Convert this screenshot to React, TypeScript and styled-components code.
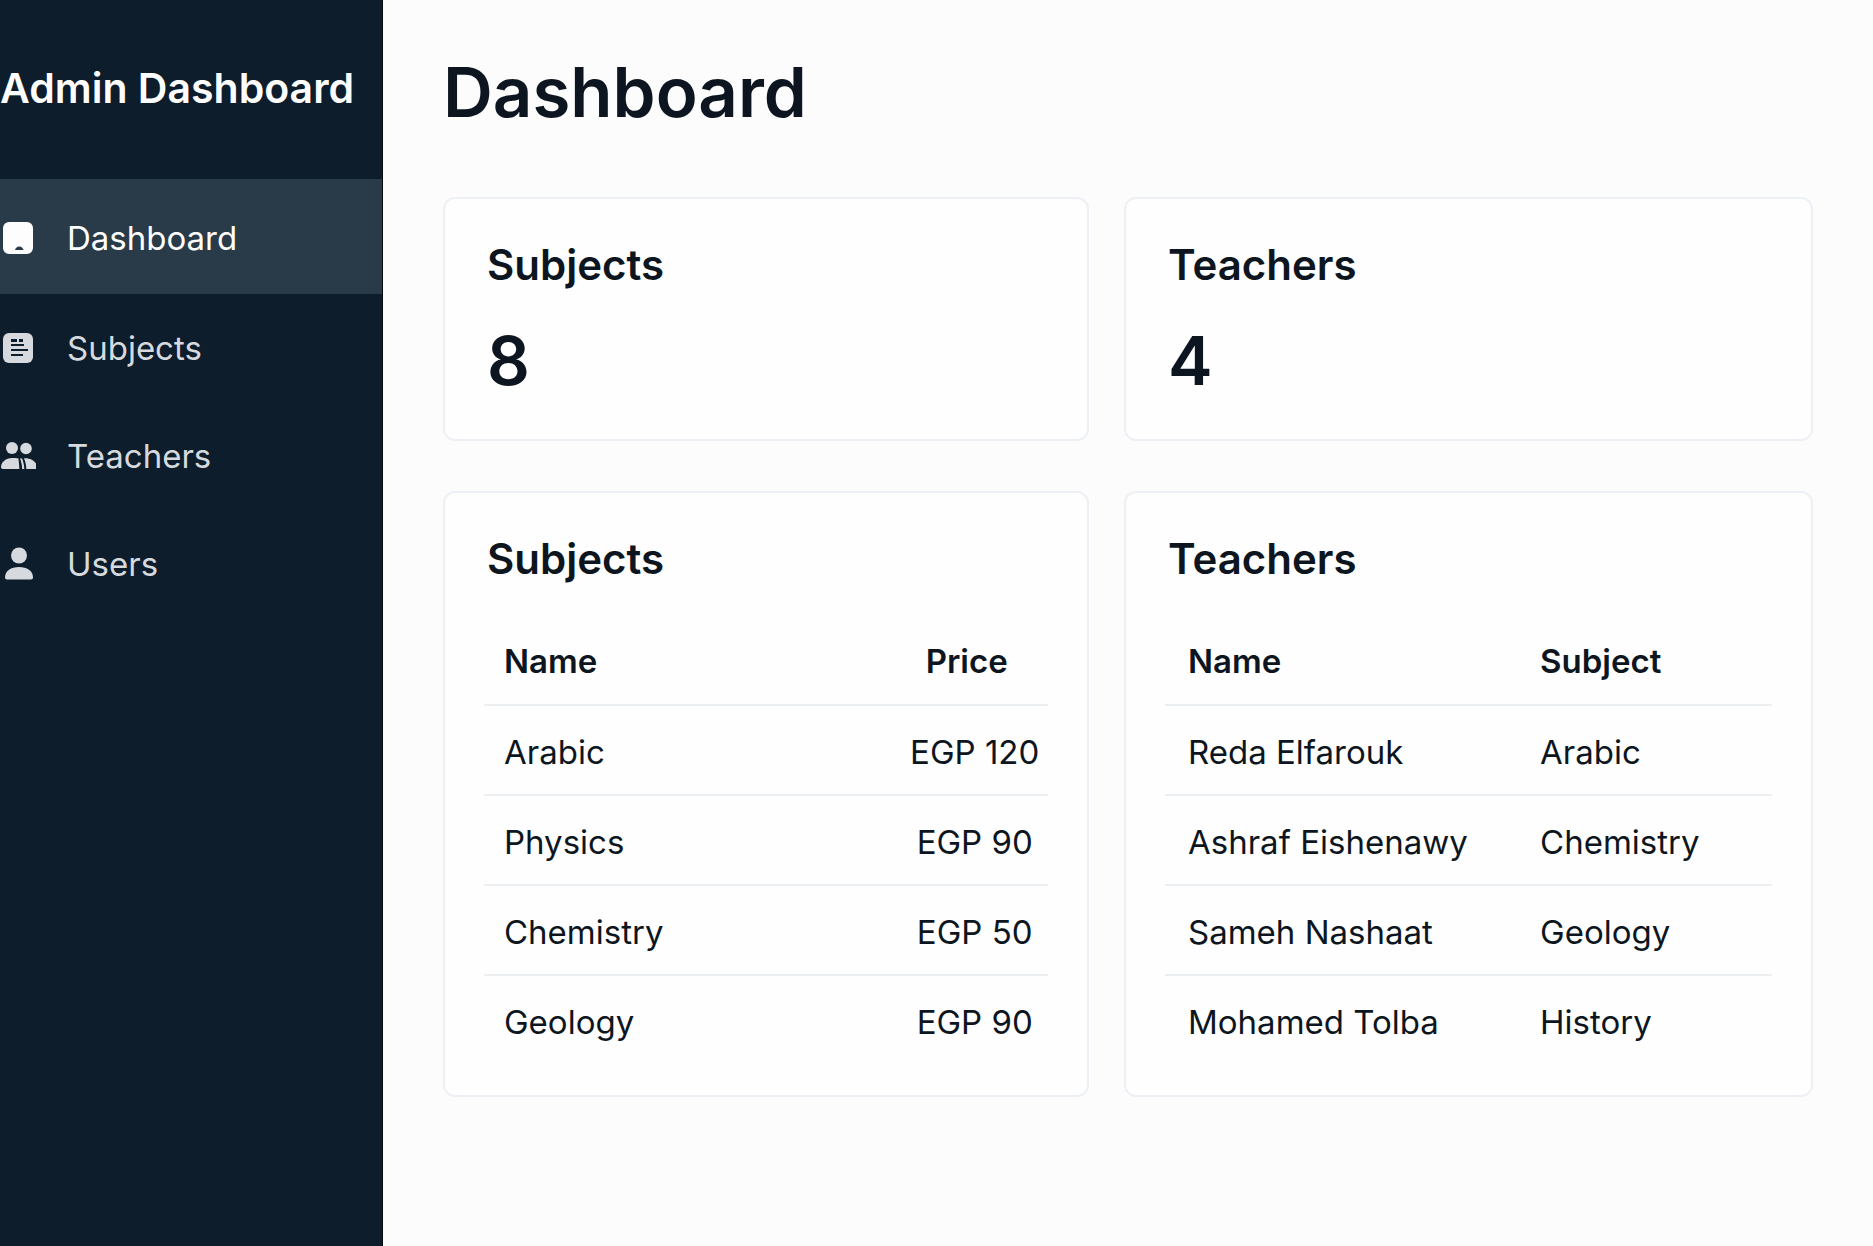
import React from 'react';
import styled, { createGlobalStyle } from 'styled-components';

const GlobalStyle = createGlobalStyle`
  *, *::before, *::after { box-sizing: border-box; }
  body {
    margin: 0;
    background: #fcfcfd;
    color: #0d1620;
    font-family: Inter, Roboto, "Liberation Sans", sans-serif;
  }
  h1, h2, p { margin: 0; }
`;

const Layout = styled.div`
  display: flex;
  min-height: 100vh;
`;

const Sidebar = styled.aside`
  flex: 0 0 383px;
  background: #0d1d2b;
  border-right: 1px solid #050b13;
  color: #d6dade;
`;

const Brand = styled.p`
  padding: 60px 0 63px;
  color: #fdfdfe;
  font-size: 41px;
  font-weight: 600;
  line-height: 56px;
  white-space: nowrap;
`;

const NavItem = styled.a<{ $active?: boolean }>`
  display: flex;
  align-items: center;
  gap: 31px;
  height: ${(p) => (p.$active ? 115 : 108)}px;
  padding-top: ${(p) => (p.$active ? 3 : 0)}px;
  background: ${(p) => (p.$active ? '#293a48' : 'transparent')};
  color: ${(p) => (p.$active ? '#fdfdfe' : 'inherit')};
  font-size: 33px;
  line-height: 40px;
  text-decoration: none;
`;

const Icon = styled.svg`
  flex: none;
  width: 36px;
  height: 36px;
  fill: currentColor;
`;

const Main = styled.main`
  flex: 1;
  min-width: 0;
  padding: 48px 60px;
`;

const PageTitle = styled.h1`
  padding-bottom: 61px;
  font-size: 69px;
  font-weight: 600;
  line-height: 88px;
`;

const Grid = styled.div`
  display: grid;
  grid-template-columns: 646fr 689fr;
  gap: 50px 35px;
`;

const Card = styled.section`
  padding: 40px 39px 30px;
  background: #fefefe;
  border: 2px solid #edf0f4;
  border-radius: 12px;
`;

const CardTitle = styled.h2`
  padding: 0 3px;
  font-size: 42px;
  font-weight: 600;
  line-height: 52px;
`;

const Count = styled.p`
  padding: 28px 3px 6px;
  font-size: 67px;
  font-weight: 600;
  line-height: 84px;
`;

const Table = styled.table`
  width: 100%;
  margin-top: 29px;
  border-collapse: collapse;
  table-layout: fixed;
  font-size: 33px;
  line-height: 40px;
  white-space: nowrap;

  tr { border-bottom: 2px solid #ebeff2; }
  tbody tr:last-child { border-bottom: 0; }
`;

type CellProps = { $centered?: boolean; $inset: number };

const HeadCell = styled.th<CellProps>`
  height: 91px;
  padding: ${(p) => (p.$centered ? '4px 16px 0 0' : `4px 0 0 ${p.$inset}px`)};
  font-weight: 600;
  text-align: ${(p) => (p.$centered ? 'center' : 'left')};
`;

const Cell = styled.td<CellProps>`
  height: 90px;
  padding: ${(p) => (p.$centered ? '3px 0 0' : `3px 0 0 ${p.$inset}px`)};
  text-align: ${(p) => (p.$centered ? 'center' : 'left')};
`;

const Col = styled.col<{ $share: number }>`
  width: ${(p) => p.$share}%;
`;

const DashboardIcon = () => (
  <Icon viewBox="0 0 36 36" aria-hidden="true">
    <path fillRule="evenodd" d="M9 2h18a6 6 0 0 1 6 6v20a6 6 0 0 1-6 6H9a6 6 0 0 1-6-6V8a6 6 0 0 1 6-6zM15 30h8.500c-.6-2.400-2-3.600-4.200-3.600s-3.700 1.200-4.300 3.600z" />
  </Icon>
);

const SubjectsIcon = () => (
  <Icon viewBox="0 0 36 36" aria-hidden="true">
    <rect x="3" y="3" width="30" height="30" rx="6" />
    <g fill="#0d1d2b">
      <rect x="11" y="9" width="6" height="3" />
      <rect x="19" y="9" width="4" height="3" />
      <rect x="11" y="14" width="13" height="2" />
      <rect x="11" y="19" width="17" height="2" />
      <rect x="11" y="24" width="12" height="2" />
    </g>
  </Icon>
);

const TeachersIcon = () => (
  <Icon viewBox="0 0 36 36" aria-hidden="true">
    <circle cx="12" cy="10" r="6" />
    <circle cx="26" cy="10.500" r="5.800" />
    <path d="M1 29c0-5 5-9 11-9 2.500 0 4.500 0 6.300.3.500 2.600.9 7 1 10.700H3c-1.300 0-2-.8-2-2z" />
    <path d="M20 20.500h2c1.400 3 2.200 6.500 2.300 10.500H22.200c-.2-4-.9-7.500-2.200-10.500z" />
    <path d="M24 20.300c7-.6 13 3.600 13 8.700 0 1.200-.7 2-2 2h-8.700c-.1-4-.9-7.700-2.300-10.700z" />
  </Icon>
);

const UsersIcon = () => (
  <Icon viewBox="0 0 36 36" aria-hidden="true">
    <circle cx="19" cy="9.500" r="8" />
    <path d="M5 31.500C5 25 11 21 19 21s14 4 14 10.500c0 1.300-.8 2-2 2H7c-1.200 0-2-.7-2-2z" />
  </Icon>
);

const navigation = [
  { label: 'Dashboard', Glyph: DashboardIcon },
  { label: 'Subjects', Glyph: SubjectsIcon },
  { label: 'Teachers', Glyph: TeachersIcon },
  { label: 'Users', Glyph: UsersIcon },
];

const counts = [
  { title: 'Subjects', value: 8 },
  { title: 'Teachers', value: 4 },
];

const tables = [
  {
    title: 'Subjects',
    columns: ['Name', 'Price'],
    firstShare: 74,
    centerLast: true,
    inset: 20,
    rows: [
      ['Arabic', 'EGP 120'],
      ['Physics', 'EGP 90'],
      ['Chemistry', 'EGP 50'],
      ['Geology', 'EGP 90'],
    ],
  },
  {
    title: 'Teachers',
    columns: ['Name', 'Subject'],
    firstShare: 58,
    centerLast: false,
    inset: 23,
    rows: [
      ['Reda Elfarouk', 'Arabic'],
      ['Ashraf Eishenawy', 'Chemistry'],
      ['Sameh Nashaat', 'Geology'],
      ['Mohamed Tolba', 'History'],
    ],
  },
];

export default function App() {
  return (
    <>
      <GlobalStyle />
      <Layout>
        <Sidebar>
          <Brand>Admin Dashboard</Brand>
          <nav aria-label="Main">
            {navigation.map(({ label, Glyph }, i) => (
              <NavItem key={label} href={`#${label.toLowerCase()}`} $active={i === 0}>
                <Glyph />
                {label}
              </NavItem>
            ))}
          </nav>
        </Sidebar>
        <Main>
          <PageTitle>Dashboard</PageTitle>
          <Grid>
            {counts.map((c) => (
              <Card key={c.title}>
                <CardTitle>{c.title}</CardTitle>
                <Count>{c.value}</Count>
              </Card>
            ))}
            {tables.map((t) => (
              <Card key={t.title}>
                <CardTitle>{t.title}</CardTitle>
                <Table>
                  <colgroup>
                    <Col $share={t.firstShare} />
                    <Col $share={100 - t.firstShare} />
                  </colgroup>
                  <thead>
                    <tr>
                      {t.columns.map((c, i) => (
                        <HeadCell key={c} scope="col" $inset={t.inset} $centered={t.centerLast && i === 1}>
                          {c}
                        </HeadCell>
                      ))}
                    </tr>
                  </thead>
                  <tbody>
                    {t.rows.map((row) => (
                      <tr key={row[0]}>
                        {row.map((cell, i) => (
                          <Cell key={cell} $inset={t.inset} $centered={t.centerLast && i === 1}>
                            {cell}
                          </Cell>
                        ))}
                      </tr>
                    ))}
                  </tbody>
                </Table>
              </Card>
            ))}
          </Grid>
        </Main>
      </Layout>
    </>
  );
}
